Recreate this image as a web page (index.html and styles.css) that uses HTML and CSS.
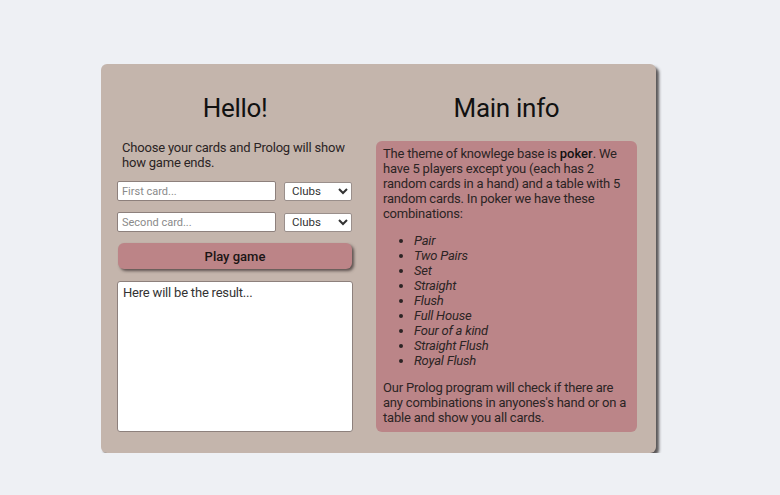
FILE: index.html
```html
<!DOCTYPE html>
<html>
<head>
<meta charset="utf-8">
<link rel="stylesheet" href="styles.css">
</head>
<body>
<div class="card">
  <section class="col left">
    <h1 class="title">Hello!</h1>
    <p class="intro">Choose your cards and Prolog will show how game ends.</p>
    <div class="row">
      <input class="field" type="text" placeholder="First card...">
      <select class="suit"><option>Clubs</option></select>
    </div>
    <div class="row">
      <input class="field" type="text" placeholder="Second card...">
      <select class="suit"><option>Clubs</option></select>
    </div>
    <button class="play">Play game</button>
    <textarea class="result">Here will be the result...</textarea>
  </section>
  <section class="col right">
    <h1 class="title">Main info</h1>
    <div class="info">
      <p>The theme of knowlege base is <b class="hl">poker</b>. We have 5 players except you (each has 2 random cards in a hand) and a table with 5 random cards. In poker we have these combinations:</p>
      <ul class="combos">
        <li>Pair</li>
        <li>Two Pairs</li>
        <li>Set</li>
        <li>Straight</li>
        <li>Flush</li>
        <li>Full House</li>
        <li>Four of a kind</li>
        <li>Straight Flush</li>
        <li>Royal Flush</li>
      </ul>
      <p>Our Prolog program will check if there are any combinations in anyones's hand or on a table and show you all cards.</p>
    </div>
  </section>
</div>
</body>
</html>
```
FILE: styles.css
```css
html, body {
  margin: 0;
  padding: 0;
}
body {
  background: #eef0f4;
  font-family: Roboto, "Noto Sans", sans-serif;
  color: #2b2424;
}
.card {
  margin: 64px 0 0 101px;
  width: 555px;
  height: 389px;
  box-sizing: border-box;
  background: #c4b5ac;
  border-radius: 6px;
  box-shadow: 3px 3px 3px rgba(40, 35, 35, 0.75);
  padding: 25px 19px 21px 16px;
  display: grid;
  grid-template-columns: 236px 261px;
  column-gap: 23px;
}
.col {
  display: flex;
  flex-direction: column;
}
.title {
  margin: 0;
  text-align: center;
  font-size: 26px;
  letter-spacing: -0.3px;
  font-weight: 400;
  line-height: 38px;
  color: #111;
}
.intro {
  margin: 13px 0 0 5px;
  font-size: 13px;
  letter-spacing: -0.2px;
  line-height: 15px;
  color: #2b2424;
}
.row {
  display: flex;
  align-items: center;
  gap: 8px;
  margin-top: 11px;
}
.field {
  width: 159px;
  height: 20px;
  box-sizing: border-box;
  border: 1px solid #8d807c;
  border-radius: 2px;
  background: #fff;
  font-family: Roboto, sans-serif;
  font-size: 11px;
  padding: 0 4px;
  margin: 0;
}
.field::placeholder {
  color: #8a8a8a;
}
.suit {
  width: 68px;
  height: 19px;
  box-sizing: border-box;
  border: 1px solid #9a8f8b;
  border-radius: 2px;
  background: #fff;
  font-family: Roboto, sans-serif;
  font-size: 11.5px;
  color: #333;
  margin: 0;
  padding: 0 3px;
}
.play {
  margin: 11px 0 0 1px;
  width: 234px;
  height: 26px;
  border: none;
  border-radius: 6px;
  background: #bc8487;
  box-shadow: 2px 2px 3px rgba(50, 40, 40, 0.7);
  font-family: Roboto, sans-serif;
  font-size: 13px;
  font-weight: 500;
  color: #1a1414;
}
.result {
  margin: 12px 0 0 0;
  width: 236px;
  height: 151px;
  box-sizing: border-box;
  border: 1px solid #8d807c;
  border-radius: 3px;
  background: #fff;
  font-family: Roboto, sans-serif;
  font-size: 13px;
  letter-spacing: -0.2px;
  line-height: 15px;
  color: #333;
  padding: 3px 5px;
  resize: none;
}
.info {
  margin-top: 14px;
  background: #bb8588;
  border-radius: 6px;
  padding: 5px 7px 7px 7px;
  font-size: 13px;
  letter-spacing: -0.2px;
  line-height: 15px;
  color: #2b2424;
  flex: 1;
}
.info p {
  margin: 0;
}
.hl {
  font-weight: 500;
  letter-spacing: 0;
  color: #111;
}
.combos {
  margin: 12px 0 12px 0;
  padding-left: 31px;
  font-style: italic;
}
```
